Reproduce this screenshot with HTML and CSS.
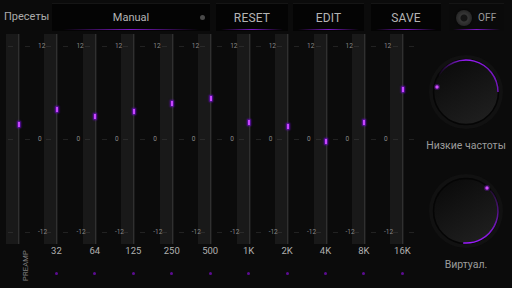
FILE: index.html
```html
<!DOCTYPE html>
<html lang="ru">
<head>
    <meta charset="UTF-8">
    <title>Эквалайзер</title>
    <link rel="stylesheet" href="styles.css">
</head>
<body>
    <!-- Top bar -->
    <header class="topbar">
        <span class="presets-label">Пресеты</span>
        <div class="preset-box">
            <span class="preset-name">Manual</span>
            <i class="preset-dot"></i>
        </div>
        <button class="btn btn-reset">RESET</button>
        <button class="btn btn-edit">EDIT</button>
        <button class="btn btn-save">SAVE</button>
        <button class="btn btn-power"><span class="power-knob"></span>OFF</button>
    </header>

    <main class="content">
        <!-- Equalizer bands -->
        <section class="eq">
            <div class="tick tick-hi"></div>
            <div class="tick tick-mid"></div>
            <div class="tick tick-lo"></div>

            <div class="col">
                <div class="strip">
                    <div class="track"><span class="thumb" style="top: 90px"></span></div>
                    <div class="preamp">PREAMP</div>
                </div>
                <div class="scale"><span>12</span><span>0</span><span>-12</span></div>
            </div>
            <div class="col">
                <div class="strip">
                    <div class="track"><span class="thumb" style="top: 75px"></span></div>
                    <div class="freq">32</div>
                    <i class="dot"></i>
                </div>
                <div class="scale"><span>12</span><span>0</span><span>-12</span></div>
            </div>
            <div class="col">
                <div class="strip">
                    <div class="track"><span class="thumb" style="top: 82px"></span></div>
                    <div class="freq">64</div>
                    <i class="dot"></i>
                </div>
                <div class="scale"><span>12</span><span>0</span><span>-12</span></div>
            </div>
            <div class="col">
                <div class="strip">
                    <div class="track"><span class="thumb" style="top: 77px"></span></div>
                    <div class="freq">125</div>
                    <i class="dot"></i>
                </div>
                <div class="scale"><span>12</span><span>0</span><span>-12</span></div>
            </div>
            <div class="col">
                <div class="strip">
                    <div class="track"><span class="thumb" style="top: 69px"></span></div>
                    <div class="freq">250</div>
                    <i class="dot"></i>
                </div>
                <div class="scale"><span>12</span><span>0</span><span>-12</span></div>
            </div>
            <div class="col">
                <div class="strip">
                    <div class="track"><span class="thumb" style="top: 64px"></span></div>
                    <div class="freq">500</div>
                    <i class="dot"></i>
                </div>
                <div class="scale"><span>12</span><span>0</span><span>-12</span></div>
            </div>
            <div class="col">
                <div class="strip">
                    <div class="track"><span class="thumb" style="top: 88px"></span></div>
                    <div class="freq">1K</div>
                    <i class="dot"></i>
                </div>
                <div class="scale"><span>12</span><span>0</span><span>-12</span></div>
            </div>
            <div class="col">
                <div class="strip">
                    <div class="track"><span class="thumb" style="top: 92px"></span></div>
                    <div class="freq">2K</div>
                    <i class="dot"></i>
                </div>
                <div class="scale"><span>12</span><span>0</span><span>-12</span></div>
            </div>
            <div class="col">
                <div class="strip">
                    <div class="track"><span class="thumb" style="top: 107px"></span></div>
                    <div class="freq">4K</div>
                    <i class="dot"></i>
                </div>
                <div class="scale"><span>12</span><span>0</span><span>-12</span></div>
            </div>
            <div class="col">
                <div class="strip">
                    <div class="track"><span class="thumb" style="top: 88px"></span></div>
                    <div class="freq">8K</div>
                    <i class="dot"></i>
                </div>
                <div class="scale"><span>12</span><span>0</span><span>-12</span></div>
            </div>
            <div class="col">
                <div class="strip">
                    <div class="track"><span class="thumb" style="top: 55px"></span></div>
                    <div class="freq">16K</div>
                    <i class="dot"></i>
                </div>
                <div class="scale"></div>
            </div>
        </section>

        <!-- Effect knobs -->
        <aside class="knobs">
            <svg class="knob" width="76" height="76" viewBox="0 0 76 76">
                <defs>
                    <linearGradient id="face" x1="0" y1="0" x2="0.6" y2="1">
                        <stop offset="0" stop-color="#080808"/>
                        <stop offset="1" stop-color="#1e1e1e"/>
                    </linearGradient>
                    <linearGradient id="arc-bass" x1="0" y1="0" x2="1" y2="0">
                        <stop offset="0" stop-color="#9b1cff" stop-opacity="0"/>
                        <stop offset="0.45" stop-color="#9b1cff" stop-opacity="1"/>
                        <stop offset="1" stop-color="#9b1cff" stop-opacity="0.7"/>
                    </linearGradient>
                    <linearGradient id="arc-virt" x1="0" y1="0" x2="0" y2="1">
                        <stop offset="0" stop-color="#9b1cff" stop-opacity="0.15"/>
                        <stop offset="1" stop-color="#9b1cff" stop-opacity="1"/>
                    </linearGradient>
                </defs>
                <circle cx="38" cy="38" r="37" fill="#111"/>
                <circle cx="38" cy="38" r="32.5" fill="url(#face)" stroke="#050505" stroke-width="1.5"/>
                <path d="M10.3 22 A32 32 0 0 1 70 38" fill="none" stroke="url(#arc-bass)" stroke-width="1.5"/>
                <circle cx="9" cy="33" r="3" fill="#9b1cff" opacity="0.3"/>
                <circle cx="9" cy="33" r="1.7" fill="#d24dff"/>
            </svg>
            <div class="knob-label knob-label-bass">Низкие частоты</div>

            <svg class="knob knob-virt" width="76" height="76" viewBox="0 0 76 76">
                <circle cx="38" cy="38" r="37" fill="#111"/>
                <circle cx="38" cy="38" r="32.5" fill="url(#face)" stroke="#050505" stroke-width="1.5"/>
                <path d="M62.5 17.4 A32 32 0 0 1 35.2 69.9" fill="none" stroke="url(#arc-virt)" stroke-width="1.5"/>
                <circle cx="59" cy="15" r="3" fill="#9b1cff" opacity="0.3"/>
                <circle cx="59" cy="15" r="1.7" fill="#d24dff"/>
            </svg>
            <div class="knob-label">Виртуал.</div>
        </aside>
    </main>
</body>
</html>
```

FILE: styles.css
```css
:root {
    --bg: #0b0b0b;
    --box: #040404;
    --band: #191919;
    --band-line: #303030;
    --tick: #2a2a2a;
    --text: #b4b4b4;
    --text-dim: #8a8a8a;
    --purple: #9b1cff;
    --purple-dim: #5c0c92;
}

* {
    margin: 0;
    padding: 0;
    box-sizing: border-box;
}

body {
    width: 512px;
    height: 288px;
    overflow: hidden;
    background: var(--bg);
    color: var(--text);
    font-family: Roboto, "Noto Sans", sans-serif;
}

/* Top bar */
.topbar {
    display: flex;
    height: 32px;
    padding-top: 3px;
    padding-bottom: 1px;
}

.presets-label {
    width: 52px;
    padding-left: 4px;
    font-size: 11px;
    line-height: 28px;
    color: #ababab;
}

.preset-box,
.btn {
    position: relative;
    height: 28px;
    border: none;
    border-top: 1px solid #151515;
    background:
        linear-gradient(90deg, transparent, #7d18c4, transparent) center bottom 1px / 86% 1px no-repeat,
        var(--box);
    color: var(--text);
    font-family: inherit;
}

.preset-box {
    width: 158px;
    display: flex;
    align-items: center;
    justify-content: center;
    font-size: 11px;
}

.preset-dot {
    position: absolute;
    right: 5px;
    top: 11px;
    width: 5px;
    height: 5px;
    border-radius: 50%;
    background: #4a4a4a;
}

.btn {
    font-size: 12px;
    letter-spacing: 0.2px;
}

.btn-reset {
    width: 72px;
    margin-left: 6px;
}

.btn-edit {
    width: 71px;
    margin-left: 5px;
}

.btn-save {
    width: 70px;
    margin-left: 7px;
}

.btn-power {
    width: 55px;
    margin-left: 8px;
    display: flex;
    align-items: center;
    padding-left: 7px;
    font-size: 10px;
    color: #9a9a9a;
    background:
        linear-gradient(90deg, transparent, #7d18c4, transparent) center bottom 1px / 86% 1px no-repeat,
        #0a0a0a;
}

.power-knob {
    width: 16px;
    height: 16px;
    margin-right: 6px;
    border-radius: 50%;
    background: radial-gradient(circle, #151515 0 3px, #363636 4px, #262626 8px);
    box-shadow: 0 0 2px #000;
}

/* Equalizer */
.content {
    display: flex;
    height: 256px;
}

.eq {
    position: relative;
    display: flex;
    width: 420px;
    padding: 2px 0 0 6px;
}

.tick {
    position: absolute;
    left: 6px;
    width: 423px;
    height: 1px;
    z-index: 2;
    background: repeating-linear-gradient(90deg,
        transparent 0 2px,
        var(--tick) 2px 7px,
        transparent 7px 19px,
        #222 19px 24px,
        transparent 24px 38.45px);
}

.tick-hi { top: 14px; }
.tick-mid { top: 107px; }
.tick-lo { top: 200px; }

.col {
    display: flex;
    width: 38.45px;
    flex: none;
}

.strip {
    display: flex;
    flex-direction: column;
    width: 24px;
}

.track {
    position: relative;
    width: 14px;
    height: 210px;
    background: linear-gradient(90deg, var(--band) 12px, var(--band-line) 12px 13px, var(--band) 13px);
}

.thumb {
    position: absolute;
    left: 11.5px;
    width: 2px;
    height: 5px;
    margin-top: -2.5px;
    background: #c846ff;
    box-shadow: 0 0 2px 1px rgba(130, 10, 240, 0.75);
    z-index: 3;
}

.freq {
    width: 24px;
    margin-top: 2px;
    font-size: 9.5px;
    line-height: 10px;
    text-align: center;
    color: #b0b0b0;
}

.dot {
    align-self: center;
    width: 3px;
    height: 3px;
    margin-top: 16px;
    border-radius: 50%;
    background: var(--purple-dim);
}

.preamp {
    margin: 6px 0 0 16px;
    writing-mode: vertical-rl;
    transform: rotate(180deg);
    font-size: 7.5px;
    line-height: 8px;
    letter-spacing: 0.2px;
    color: #7f7f7f;
}

.scale {
    position: relative;
    z-index: 2;
    display: flex;
    flex-direction: column;
    justify-content: space-between;
    height: 210px;
    padding: 8px 0 8px 8px;
    font-size: 6.5px;
    line-height: 8px;
    white-space: nowrap;
    color: var(--text-dim);
}

/* Knobs */
.knobs {
    display: flex;
    flex-direction: column;
    align-items: center;
    width: 92px;
    padding-top: 22px;
}

.knob-label {
    margin-top: 10px;
    font-size: 10.5px;
    line-height: 12px;
    color: #9c9c9c;
    white-space: nowrap;
}

.knob-virt {
    margin-top: 21px;
}
```
